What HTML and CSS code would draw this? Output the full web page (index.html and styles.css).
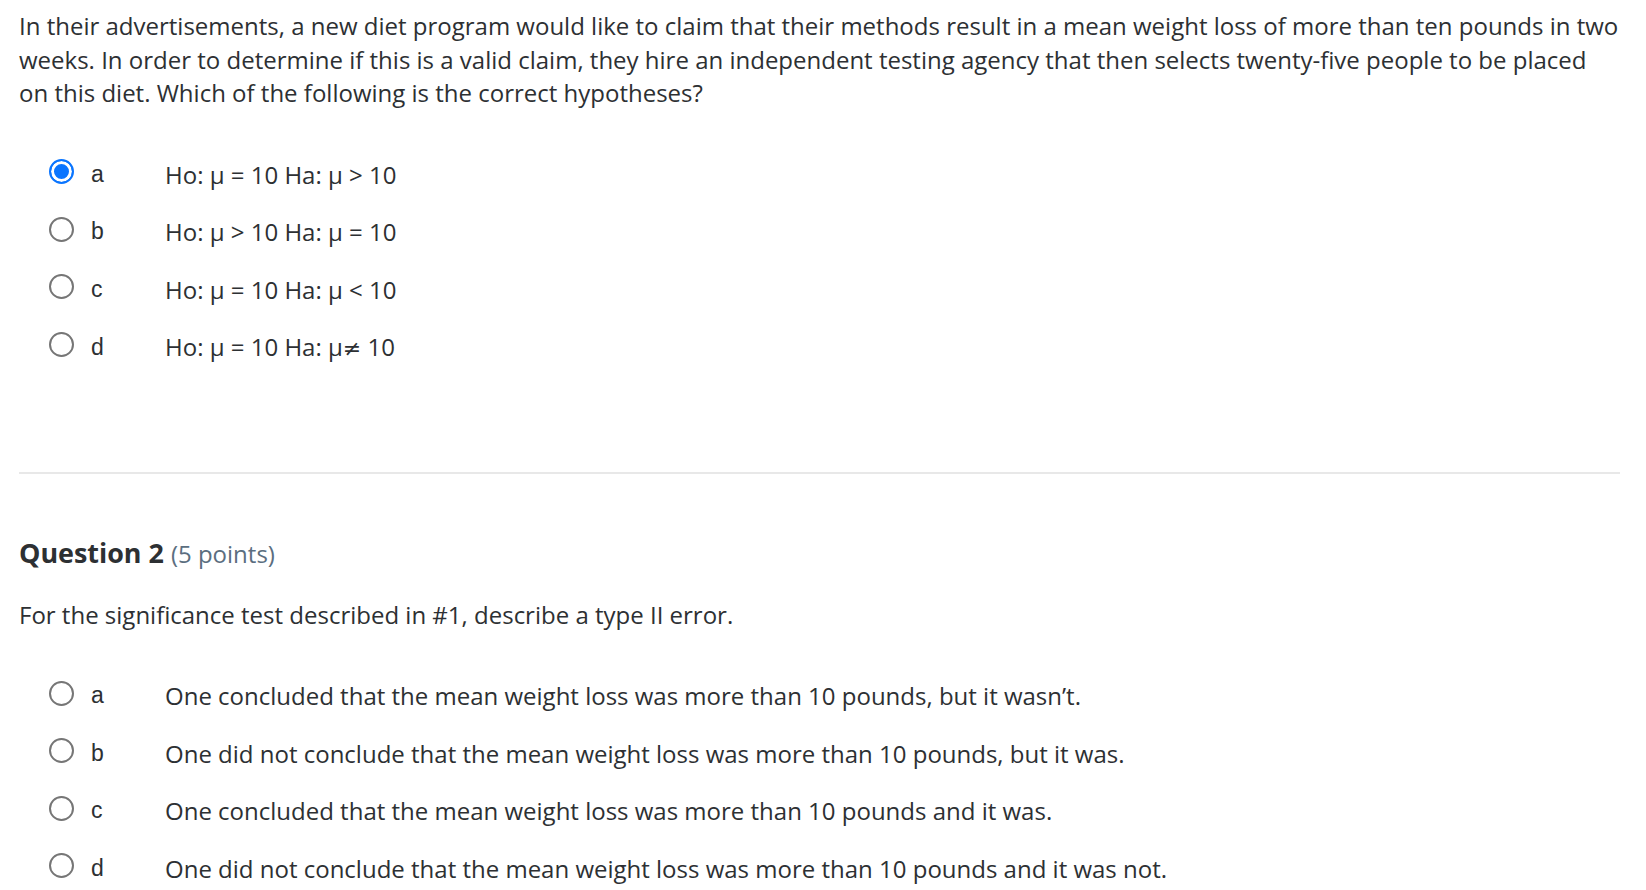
FILE: index.html
```html
<!DOCTYPE html>
<html lang="en">
<head>
<meta charset="utf-8">
<title>Quiz</title>
<link rel="stylesheet" href="styles.css">
</head>
<body>
<div class="page">
  <section class="question">
    <p class="question-text">In their advertisements, a new diet program would like to claim that their methods result in a mean weight loss of more than ten pounds in two weeks. In order to determine if this is a valid claim, they hire an independent testing agency that then selects twenty-five people to be placed on this diet. Which of the following is the correct hypotheses?</p>
    <ul class="options first">
      <li class="option"><span class="radio checked"></span><span class="letter">a</span><span class="answer">Ho: μ = 10 Ha: μ &gt; 10</span></li>
      <li class="option"><span class="radio"></span><span class="letter">b</span><span class="answer">Ho: μ &gt; 10 Ha: μ = 10</span></li>
      <li class="option"><span class="radio"></span><span class="letter">c</span><span class="answer">Ho: μ = 10 Ha: μ &lt; 10</span></li>
      <li class="option"><span class="radio"></span><span class="letter">d</span><span class="answer">Ho: μ = 10 Ha: μ<span class="neq">≠</span> 10</span></li>
    </ul>
  </section>
  <hr class="divider">
  <section class="question">
    <h2 class="question-title">Question 2 <span class="points">(5 points)</span></h2>
    <p class="question-text">For the significance test described in #1, describe a type II error.</p>
    <ul class="options second">
      <li class="option"><span class="radio"></span><span class="letter">a</span><span class="answer">One concluded that the mean weight loss was more than 10 pounds, but it wasn’t.</span></li>
      <li class="option"><span class="radio"></span><span class="letter">b</span><span class="answer">One did not conclude that the mean weight loss was more than 10 pounds, but it was.</span></li>
      <li class="option"><span class="radio"></span><span class="letter">c</span><span class="answer">One concluded that the mean weight loss was more than 10 pounds and it was.</span></li>
      <li class="option"><span class="radio"></span><span class="letter">d</span><span class="answer">One did not conclude that the mean weight loss was more than 10 pounds and it was not.</span></li>
    </ul>
  </section>
</div>
</body>
</html>
```

FILE: styles.css
```css
html, body {
  margin: 0;
  padding: 0;
  background: #ffffff;
}

body {
  font-family: "Open Sans", "Noto Sans", sans-serif;
  font-size: 24px;
  line-height: 33.6px;
  color: #2d3033;
}

.page {
  padding: 9px 26px 0 19px;
}

.question-text {
  margin: 0;
}

.options {
  list-style: none;
  margin: 36px 0 0 0;
  padding: 0;
}

.options.second {
  margin-top: 36px;
}

.option {
  display: flex;
  align-items: center;
  height: 57.6px;
}

.radio {
  box-sizing: border-box;
  width: 25px;
  height: 25px;
  border-radius: 50%;
  border: 2px solid #767676;
  margin-left: 30px;
  flex: none;
  position: relative;
  top: -3px;
}

.radio.checked {
  border: 2.5px solid #0a75ff;
  background: #0a75ff;
  box-shadow: inset 0 0 0 3px #ffffff;
}

.letter {
  font-family: "Liberation Sans", Arial, sans-serif;
  font-size: 23px;
  width: 74px;
  margin-left: 17px;
  flex: none;
}

.answer {
  flex: 1;
}

.neq {
  font-family: "DejaVu Sans", sans-serif;
  font-size: 22px;
}

.divider {
  border: 0;
  height: 2px;
  background: #e8e8e8;
  margin: 95.5px 0 0 0;
}

.question-title {
  margin: 59px 0 0 0;
  font-size: 26.9px;
  line-height: 40px;
  font-weight: 700;
  color: #2d3033;
}

.points {
  font-size: 24px;
  font-weight: 400;
  color: #5b6e80;
}

.question-title + .question-text {
  margin-top: 24px;
}
```
